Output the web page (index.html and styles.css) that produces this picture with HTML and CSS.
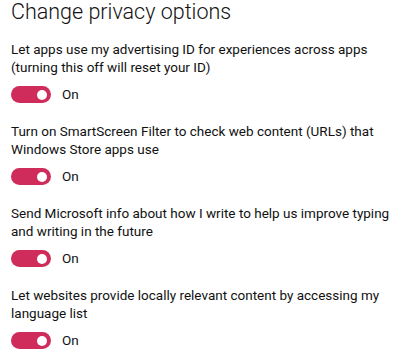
FILE: index.html
```html
<!DOCTYPE html>
<html lang="en">
<head>
    <meta charset="UTF-8">
    <title>Change privacy options</title>
    <link rel="stylesheet" href="styles.css">
</head>
<body>

<div class="page">

    <h1 class="title">Change privacy options</h1>

    <div class="option">
        <p class="label">Let apps use my advertising ID for experiences across apps (turning this off will reset your ID)</p>
        <div class="switchrow">
            <span class="toggle"><span class="knob"></span></span>
            <span class="state">On</span>
        </div>
    </div>

    <div class="option">
        <p class="label">Turn on SmartScreen Filter to check web content (URLs) that Windows Store apps use</p>
        <div class="switchrow">
            <span class="toggle"><span class="knob"></span></span>
            <span class="state">On</span>
        </div>
    </div>

    <div class="option">
        <p class="label">Send Microsoft info about how I write to help us improve typing and writing in the future</p>
        <div class="switchrow">
            <span class="toggle"><span class="knob"></span></span>
            <span class="state">On</span>
        </div>
    </div>

    <div class="option">
        <p class="label">Let websites provide locally relevant content by accessing my language list</p>
        <div class="switchrow">
            <span class="toggle"><span class="knob"></span></span>
            <span class="state">On</span>
        </div>
    </div>

</div>

</body>
</html>
```

FILE: styles.css
```css
*{
    margin: 0;
    padding: 0;
}

body{
    background-color: #fff;
    color: #111;
    font-family: Roboto, "Liberation Sans", sans-serif;
}

.page{
    padding: 0 0 0 11px;
}

.title{
    font-size: 21.5px;
    font-weight: 300;
    line-height: 24px;
    margin-bottom: 16px;
}

.option{
    margin-bottom: 18px;
}

.option + .option{
    padding-top: 1px;
}

.label{
    font-size: 13.5px;
    line-height: 18px;
}

.switchrow{
    display: flex;
    align-items: center;
    height: 17px;
    margin-top: 10px;
}

.toggle{
    display: flex;
    justify-content: flex-end;
    align-items: center;
    width: 40px;
    height: 17px;
    border-radius: 9px;
    background-color: #cf2c5c;
    padding-right: 4px;
    box-sizing: border-box;
}

.knob{
    width: 10px;
    height: 10px;
    border-radius: 50%;
    background-color: #fff;
}

.state{
    font-size: 13.5px;
    line-height: 17px;
    margin-left: 11px;
}
```
